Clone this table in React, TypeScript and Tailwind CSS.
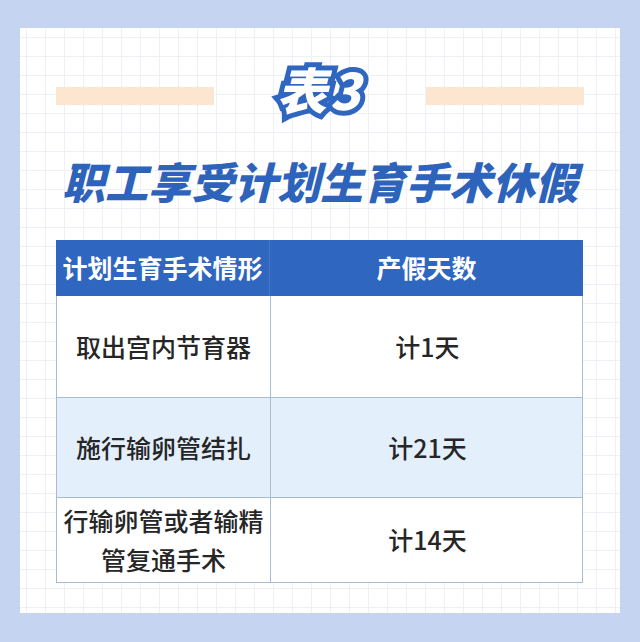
const ROWS = [
  { name: ["取出宫内节育器"], days: "计1天", tint: false, h: "h-[101px]" },
  { name: ["施行输卵管结扎"], days: "计21天", tint: true, h: "h-[100px]" },
  { name: ["行输卵管或者输精", "管复通手术"], days: "计14天", tint: false, h: "h-[85px]" },
];

const cjk = "font-['Noto_Sans_CJK_SC','Noto_Sans',sans-serif]";

export default function App() {
  return (
    <div className={`min-h-screen bg-[#c5d5f1] px-5 pt-[28px] pb-[29px] ${cjk}`}>
      {/* card with faint grid paper */}
      <div className="h-[585px] w-[600px] bg-white bg-[linear-gradient(to_right,#edf0f5_1px,transparent_1px),linear-gradient(to_bottom,#edf0f5_1px,transparent_1px)] bg-[size:19px_19px] bg-[position:6px_9px] px-[36px] pt-[36px]">
        {/* title row */}
        <div className="flex h-[60px] items-center">
          <div className="h-[18px] w-[158px] bg-[#fde6cf] mt-[4px]" />
          <div className="flex flex-1 justify-center">
            <span className="-translate-y-[6px] text-[50px] leading-[60px] font-black italic text-white tracking-[3px] [-webkit-text-stroke:10px_#2f66c0] [paint-order:stroke_fill]">
              表3
            </span>
          </div>
          <div className="h-[18px] w-[158px] bg-[#fde6cf] mt-[4px]" />
        </div>

        {/* subtitle */}
        <h1 className="mt-[28px] text-center text-[43px] leading-[56px] font-black italic text-[#2d63bb]">
          职工享受计划生育手术休假
        </h1>

        {/* table */}
        <div className="mt-[32px] w-[527px] border-b border-[#a9bccd]">
          <div className="grid h-[56px] grid-cols-[214px_313px] bg-[#2f66c0] text-[25px] font-bold text-white">
            <div className="flex items-center justify-center border-r border-[#4576c6]">计划生育手术情形</div>
            <div className="flex items-center justify-center">产假天数</div>
          </div>
          {ROWS.map((r, i) => (
            <div
              key={i}
              className={`grid grid-cols-[214px_313px] border-x border-[#a9bccd] ${r.h} ${i > 0 ? "border-t" : ""} ${r.tint ? "bg-[#e4effc]" : "bg-white"} text-[25px] font-medium text-[#262626]`}
            >
              <div className="flex flex-col items-center justify-center border-r border-[#a9bccd] leading-[39px]">
                {r.name.map((n) => (
                  <span key={n}>{n}</span>
                ))}
              </div>
              <div className="flex items-center justify-center">{r.days}</div>
            </div>
          ))}
        </div>
      </div>
    </div>
  );
}
